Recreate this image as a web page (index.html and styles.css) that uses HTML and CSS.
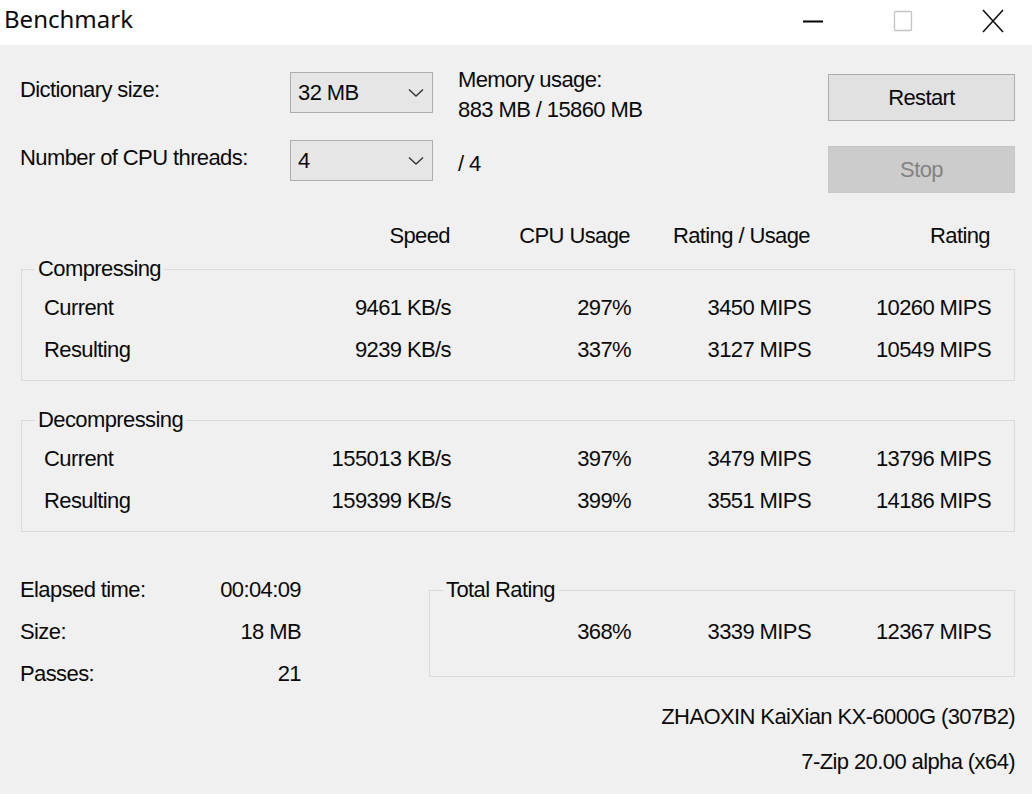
FILE: index.html
```html
<!DOCTYPE html>
<html>
<head>
<meta charset="utf-8">
<link rel="stylesheet" href="styles.css">
</head>
<body>
<div class="window">
  <div class="titlebar">
    <div class="title">Benchmark</div>
    <div class="ctrls">
      <span class="ctrl"><svg width="22" height="22" viewBox="0 0 22 22"><path d="M1 11.5h20" stroke="#000" stroke-width="2"/></svg></span>
      <span class="ctrl"><svg width="22" height="22" viewBox="0 0 22 22"><rect x="2.5" y="1.5" width="17" height="19" rx="1" fill="none" stroke="#c4c4c4" stroke-width="1.3"/></svg></span>
      <span class="ctrl"><svg width="22" height="24" viewBox="0 0 22 24"><path d="M1 1L21 23M21 1L1 23" stroke="#111" stroke-width="1.6"/></svg></span>
    </div>
  </div>

  <div class="main">
    <div class="top">
      <div class="settings">
        <div class="lbl">Dictionary size:</div>
        <div class="select"><span>32 MB</span><svg class="chev" width="16" height="10" viewBox="0 0 16 10"><path d="M1 1.5L8 8L15 1.5" fill="none" stroke="#333" stroke-width="1.4"/></svg></div>
        <div class="memory"><div>Memory usage:</div><div>883 MB / 15860 MB</div></div>
        <div class="lbl">Number of CPU threads:</div>
        <div class="select"><span>4</span><svg class="chev" width="16" height="10" viewBox="0 0 16 10"><path d="M1 1.5L8 8L15 1.5" fill="none" stroke="#333" stroke-width="1.4"/></svg></div>
        <div class="threads">/ 4</div>
      </div>
      <div class="buttons">
        <div class="btn">Restart</div>
        <div class="btn disabled">Stop</div>
      </div>
    </div>

    <div class="grid head">
      <div></div><div>Speed</div><div>CPU Usage</div><div>Rating / Usage</div><div>Rating</div>
    </div>

    <fieldset class="group">
      <legend>Compressing</legend>
      <div class="grid row"><div class="name">Current</div><div>9461 KB/s</div><div>297%</div><div>3450 MIPS</div><div>10260 MIPS</div></div>
      <div class="grid row"><div class="name">Resulting</div><div>9239 KB/s</div><div>337%</div><div>3127 MIPS</div><div>10549 MIPS</div></div>
    </fieldset>

    <fieldset class="group second">
      <legend>Decompressing</legend>
      <div class="grid row"><div class="name">Current</div><div>155013 KB/s</div><div>397%</div><div>3479 MIPS</div><div>13796 MIPS</div></div>
      <div class="grid row"><div class="name">Resulting</div><div>159399 KB/s</div><div>399%</div><div>3551 MIPS</div><div>14186 MIPS</div></div>
    </fieldset>

    <div class="bottom">
      <div class="stats">
        <div class="stat"><span>Elapsed time:</span><span>00:04:09</span></div>
        <div class="stat"><span>Size:</span><span>18 MB</span></div>
        <div class="stat"><span>Passes:</span><span>21</span></div>
      </div>
      <fieldset class="group total">
        <legend>Total Rating</legend>
        <div class="totrow"><div></div><div>368%</div><div>3339 MIPS</div><div>12367 MIPS</div></div>
      </fieldset>
    </div>

    <div class="info">ZHAOXIN KaiXian KX-6000G (307B2)</div>
    <div class="info ver">7-Zip 20.00 alpha (x64)</div>
  </div>
</div>
</body>
</html>
```

FILE: styles.css
```css
* { box-sizing: border-box; }
html, body { margin: 0; padding: 0; }
body {
  width: 1032px;
  height: 794px;
  overflow: hidden;
  background: #f0f0f0;
  font-family: "Liberation Sans", Arial, sans-serif;
  font-size: 22px;
  letter-spacing: -0.6px;
  color: #0a0a0a;
}
.window { width: 1032px; height: 794px; background: #f0f0f0; }

.titlebar {
  height: 45px;
  background: #fff;
  display: flex;
  align-items: center;
  justify-content: space-between;
}
.title {
  font-family: "Noto Sans", "Open Sans", sans-serif;
  font-size: 24px;
  letter-spacing: 0;
  padding-left: 4px;
  margin-top: -8px;
}
.ctrls { display: flex; gap: 68px; margin-top: -4px; margin-right: 28px; }
.ctrl { width: 22px; display: flex; justify-content: center; align-items: center; }

.main { padding: 0 17px 0 20px; }

.top {
  display: flex;
  justify-content: space-between;
  padding-top: 27px;
  height: 170px;
}
.settings {
  display: grid;
  grid-template-columns: 270px 143px auto;
  grid-template-rows: 41px 41px;
  row-gap: 27px;
  align-items: center;
}
.settings .lbl { margin-top: -6px; }
.select {
  height: 41px;
  background: #e6e6e6;
  border: 1px solid #adadad;
  display: flex;
  align-items: center;
  justify-content: space-between;
  padding: 0 8px 0 7px;
}
.memory { line-height: 30px; margin-top: 5px; margin-left: 25px; }
.threads { margin-top: 6px; margin-left: 25px; }
.buttons { display: flex; flex-direction: column; gap: 25px; padding-top: 2px; }
.btn {
  width: 187px;
  height: 47px;
  background: #e1e1e1;
  border: 1px solid #adadad;
  display: flex;
  align-items: center;
  justify-content: center;
}
.btn.disabled { background: #cccccc; border-color: #c6c6c6; color: #838383; }

.grid {
  display: grid;
  grid-template-columns: 250px 180px 180px 180px 180px;
}
.grid > div { text-align: right; }
.grid > div.name { text-align: left; padding-left: 22px; }
.head { height: 42px; align-items: center; margin-top: 0; }
.head > div, .row > div { line-height: 42px; }

.group {
  margin: 0 0 0 1px;
  padding: 6px 0 9px 0;
  border: 1px solid #dadada;
  min-width: 0;
}
.group legend {
  margin-left: 13px;
  padding: 0 3px;
  line-height: 24px;
}
.group .grid { grid-template-columns: 249px 180px 180px 180px 180px; }
.group.second { margin-top: 27px; }

.bottom {
  display: flex;
  justify-content: space-between;
  margin-top: 37px;
}
.stats { width: 281px; }
.stat { display: flex; justify-content: space-between; line-height: 42px; }
.group.total { width: 586px; margin: 9px 0 0 0; padding: 9px 0 0 0; height: 99px; }
.totrow { display: grid; grid-template-columns: 21px 180px 180px 180px; }
.totrow > div { text-align: right; line-height: 42px; }

.info { text-align: right; line-height: 42px; margin-top: 1px; }
.info.ver { margin-top: 3px; }
```
